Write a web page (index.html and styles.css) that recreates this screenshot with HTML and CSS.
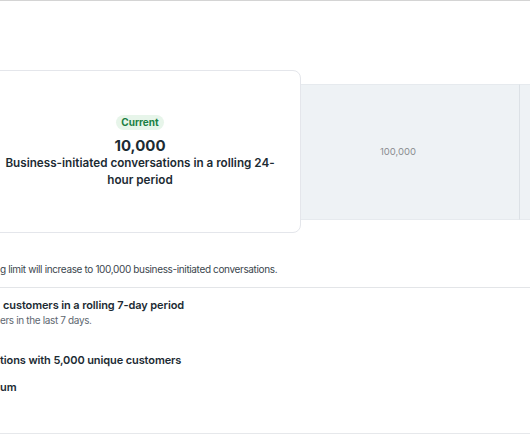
FILE: index.html
```html
<!DOCTYPE html>
<html lang="en">
<head>
<meta charset="utf-8">
<title>Messaging limit</title>
<link rel="stylesheet" href="styles.css">
</head>
<body>
<div class="topline"></div>
<main class="page">
  <section class="tiers">
    <div class="tier tier-prev"></div>
    <div class="tier-card">
      <span class="badge">Current</span>
      <div class="card-num">10,000</div>
      <div class="card-desc">Business-initiated conversations in a rolling 24-hour period</div>
    </div>
    <div class="tier tier-next">100,000</div>
    <div class="tier tier-last"></div>
  </section>

  <p class="note">g limit will increase to 100,000 business-initiated conversations.</p>

  <section class="reqs">
    <div class="req req-first">
      <div class="req-title t1">customers in a rolling 7-day period</div>
      <div class="req-sub">ers in the last 7 days.</div>
    </div>
    <div class="req req-second">
      <div class="req-title">tions with 5,000 unique customers</div>
    </div>
    <div class="req req-third">
      <div class="req-title">um</div>
    </div>
  </section>
  <div class="footer-line"></div>
</main>
</body>
</html>
```

FILE: styles.css
```css
html, body {
  margin: 0;
  padding: 0;
  background: #ffffff;
  overflow: hidden;
}

body {
  font-family: Inter, "Noto Sans", sans-serif;
  color: #1c2b33;
  width: 530px;
  height: 442px;
}

.topline {
  border-top: 1px solid #d4d4d4;
}

.page {
  width: 530px;
}

.tiers {
  display: flex;
  align-items: center;
  margin-top: 69px;
  margin-left: -240px;
  width: 1100px;
  height: 163px;
}

.tier {
  height: 136px;
  background: #eef2f5;
  display: flex;
  align-items: center;
  justify-content: center;
  font-size: 9.5px;
  color: #8a8d91;
  flex: none;
  box-sizing: border-box;
  border-top: 1px solid #e6eaee;
  border-bottom: 1px solid #e6eaee;
}

.tier-prev {
  width: 246px;
  border-right: 1px solid #dce1e6;
}

.tier-next {
  width: 246px;
  margin-left: -27px;
  padding-left: 3px;
  border-right: 1px solid #dce1e6;
}

.tier-last {
  width: 246px;
}

.tier-card {
  position: relative;
  z-index: 1;
  flex: none;
  width: 322px;
  height: 163px;
  margin-left: -27px;
  box-sizing: border-box;
  background: #ffffff;
  border: 1px solid #e4e6eb;
  border-radius: 8px;
  display: flex;
  flex-direction: column;
  align-items: center;
  justify-content: center;
  text-align: center;
}

.badge {
  display: inline-block;
  background: #e7f5ea;
  color: #1a7f44;
  font-size: 10px;
  font-weight: 700;
  line-height: 15px;
  padding: 0 5px;
  border-radius: 8px;
}

.card-num {
  font-size: 15px;
  font-weight: 700;
  line-height: 20px;
  margin-top: 6px;
}

.card-desc {
  font-size: 11.7px;
  font-weight: 600;
  line-height: 17px;
  width: 280px;
  margin-top: -1px;
}

.note {
  margin: 29px 0 0 0;
  font-size: 10px;
  letter-spacing: -0.36px;
  line-height: 14px;
  color: #3b464e;
  white-space: nowrap;
  padding-bottom: 11px;
  border-bottom: 1px solid #e3e5e8;
}

.reqs {
  padding-top: 10px;
}

.req-title {
  font-size: 11px;
  font-weight: 600;
  letter-spacing: -0.1px;
  line-height: 15px;
  white-space: nowrap;
}

.t1 {
  padding-left: 3px;
}

.req-sub {
  font-size: 10px;
  letter-spacing: -0.36px;
  line-height: 14px;
  color: #606770;
  white-space: nowrap;
}

.req-second {
  margin-top: 26px;
}

.req-third {
  margin-top: 12px;
}

.footer-line {
  margin-top: 38px;
  height: 8px;
  border-top: 1px solid #e6e8eb;
  border-bottom: 1px solid #d6d9dd;
}
```
